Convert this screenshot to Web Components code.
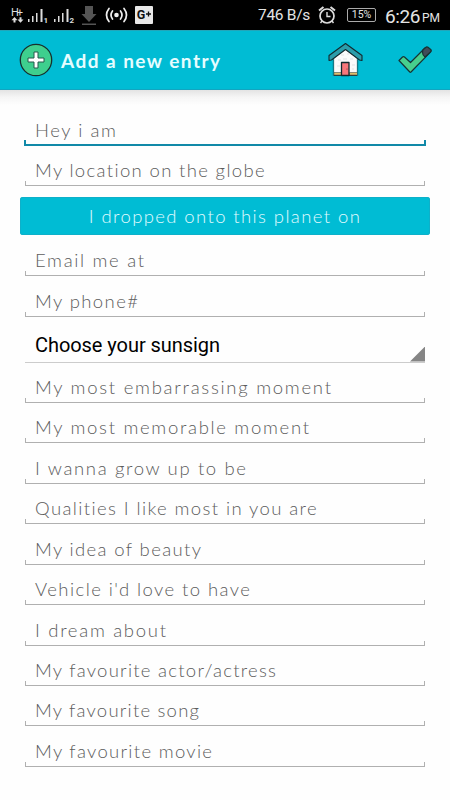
<!DOCTYPE html>
<html lang="en">
<head>
<meta charset="utf-8">
<title>Add a new entry</title>
<style>
body {
  margin: 0;
  background: #fefefe;
  font-family: Lato, "Liberation Sans", sans-serif;
}
</style>
</head>
<body>
<entry-screen></entry-screen>

<script>
// stretches a line of text to the given width by its letter spacing
function fitText(el, text, width) {
  el.style.letterSpacing = '0';
  const natural = el.getBoundingClientRect().width;
  const gaps = text.length - 1;
  el.style.letterSpacing = ((width - natural) / gaps).toFixed(3) + 'px';
}

class StatusBar extends HTMLElement {
  constructor() {
    super();
    this.attachShadow({ mode: 'open' }).innerHTML = `
<style>
:host {
  display: flex;
  justify-content: space-between;
  box-sizing: border-box;
  height: 30px;
  background: #000;
  color: #e4e4e4;
  font-family: Roboto, sans-serif;
}
svg { display: block; }
.right {
  display: flex;
  align-items: center;
  padding-right: 10px;
  white-space: nowrap;
}
.speed { font-size: 15.5px; letter-spacing: -.3px; width: 52px; }
.alarm { margin-left: 8px; }
.battery {
  box-sizing: border-box;
  width: 29px;
  height: 14px;
  margin-left: 11px;
  border: 1px solid #aaa;
  border-radius: 2px;
  font-size: 10.5px;
  line-height: 12.5px;
  text-align: center;
}
.clock { font-size: 19px; letter-spacing: -.4px; margin: 2px 0 0 9px; width: 34px; }
.ampm { font-size: 12px; margin: 6px 0 0 3px; width: 18px; }
</style>
<svg width="160" height="30" viewBox="0 0 160 30" fill="#ddd" font-family="Roboto, sans-serif">
  <text x="11" y="15.500" font-size="11" textLength="12">H+</text>
  <path d="M14.5 17l3 3.2h-2v2.3h-2v-2.3h-2zM20.500 22.700l3-3.200h-2v-2.300h-2v2.300h-2z"/>
  <path d="M28 19h1.500v3h-1.500zM32 16h1.500v6h-1.500zM36 13h1.500v9h-1.500zM40.500 9h2v13h-2z"/>
  <text x="43.500" y="23" font-size="8" font-weight="700">1</text>
  <path d="M54 19h1.500v3h-1.500zM58 16h1.500v6h-1.500zM62 13h1.500v9h-1.500zM66.500 9h2v13h-2z"/>
  <text x="69.500" y="23" font-size="8" font-weight="700">2</text>
  <path d="M85 6h8v8h3.500l-7.500 8-7.500-8h3.500zM82 23.500h14v1.500h-14z" fill="#555"/>
  <g fill="none" stroke="#eee" stroke-width="1.700" stroke-linecap="round">
    <path d="M112.500 11q-3 4 0 8M109 8.500q-5 6.500 0 13M120.500 11q3 4 0 8M124 8.500q5 6.500 0 13"/>
  </g>
  <circle cx="116.500" cy="15" r="2.300" fill="#eee"/>
  <rect x="135" y="6" width="18" height="18" rx="1" fill="#e8e8e8"/>
  <text x="136.700" y="19.300" font-size="12.500" font-weight="700" fill="#111">G</text>
  <path d="M146 14h5M148.500 11.500v5" stroke="#111" stroke-width="1.300"/>
</svg>
<div class="right">
  <span class="speed">746 B/s</span>
  <svg class="alarm" width="18" height="20" viewBox="0 0 18 20" fill="none" stroke="#ddd">
    <circle cx="9" cy="11" r="7" stroke-width="1.700"/>
    <path d="M1 5.500L5.500 2M17 5.500L12.500 2" stroke-width="2"/>
    <path d="M9 7v4.500h3.500" stroke-width="1.400"/>
    <path d="M4 16l-1.500 2M14 16l1.500 2" stroke-width="1.400"/>
  </svg>
  <div class="battery">15%</div>
  <span class="clock">6:26</span>
  <span class="ampm">PM</span>
</div>`;
  }
}
customElements.define('status-bar', StatusBar);

class TitleBar extends HTMLElement {
  constructor() {
    super();
    this.attachShadow({ mode: 'open' }).innerHTML = `
<style>
:host {
  display: flex;
  align-items: center;
  box-sizing: border-box;
  height: 60px;
  padding: 0 18px 0 19px;
  background: #00bcd4;
  border-top: 1px solid #23a5b8;
  border-bottom: 1px solid #12a5c0;
}
svg { display: block; flex: none; }
.title {
  flex: 1;
  margin: 2px 0 0 8px;
  color: #e6fdff;
  font-size: 19px;
  font-weight: 700;
  line-height: 24px;
  white-space: nowrap;
}
.check { margin-left: 35px; }
</style>
<svg width="34" height="34" viewBox="0 0 34 34">
  <circle cx="17" cy="17" r="15.700" fill="#3ecf8e" stroke="#17302d" stroke-width="1.300"/>
  <path d="M15 9h4v6h6v4h-6v6h-4v-6h-6v-4h6z" fill="#fff" stroke="#24584a" stroke-width="1"/>
</svg>
<div class="title"><span><slot></slot></span></div>
<svg class="home" width="36" height="36" viewBox="0 0 36 36" stroke="#122a2f" stroke-linejoin="round">
  <path d="M6.500 15L18.500 6 30.500 15v18.500h-24z" fill="#fbfbfb" stroke-width="1.200"/>
  <path d="M7 30.500h8v2.500H7zM22.500 30.500h8v2.500h-8z" fill="#e2bd69" stroke="#5b665c" stroke-width=".7"/>
  <path d="M14.500 20.500h7.500v13h-7.500z" fill="#f8777b" stroke-width="1.300"/>
  <path d="M18.500 1.500L35 13.500V18.500l-2.500-.5L18.500 7.500 4.500 18l-2.500.5v-5z" fill="#2b9daa" stroke-width="1.100"/>
  <path d="M6.500 17v17M30.500 17v17" stroke="#167985" stroke-width="1"/>
  <path d="M14 13h3M20 12h2M11 18h3M23 17h3M10 24h3M25 23h3M16 17h4M25 27h2" stroke="#d7dadb" stroke-width=".7"/>
  <circle cx="20" cy="27" r=".5" stroke="none" fill="#6a2020"/>
</svg>
<svg class="check" width="34" height="28" viewBox="0 0 34 28" stroke="#173334" stroke-width="1.200" stroke-linejoin="round">
  <path d="M1 14.500l3.500-3.500q1-.8 2 0l6 5.500L27 2q1.500-1.300 3 0l2.500 2q1 1.200-.3 2.400L13 26q-.6.600-1.200 0z" fill="#47cf8d"/>
  <path d="M25 3.800L28 1.300q1-.7 2 0l2.700 2.200q1 1.200-.2 2.400l-5.500 5.100q-3.500-2.500-2-7.200z" fill="#414c58"/>
</svg>`;
  }
  connectedCallback() {
    fitText(this.shadowRoot.querySelector('.title span'), this.textContent, 159);
  }
}
customElements.define('title-bar', TitleBar);

// text line with a hint and an underline turned up at both ends
class EntryField extends HTMLElement {
  constructor() {
    super();
    this.attachShadow({ mode: 'open' }).innerHTML = `
<style>
:host {
  display: flex;
  flex-direction: column;
  justify-content: flex-end;
  height: 40.43px;
  margin: 0 25px;
}
.hint {
  padding: 0 10px;
  color: #5c5c5c;
  font-size: 18.5px;
  font-weight: 300;
  line-height: 22px;
  white-space: nowrap;
}
.line {
  box-sizing: border-box;
  height: 5px;
  border: 1px solid #b0b0b0;
  border-top: 0;
}
:host([active]) { margin: 0 24px; }
:host([active]) .hint { padding: 0 11px; }
:host([active]) .line {
  border: 2px solid #1189a8;
  border-top: 0;
  height: 6px;
  margin-top: -1px;
}
</style>
<div class="hint"><span><slot></slot></span></div>
<div class="line"></div>`;
  }
  connectedCallback() {
    fitText(this.shadowRoot.querySelector('.hint span'), this.textContent, Number(this.getAttribute('fit')));
  }
}
customElements.define('entry-field', EntryField);

class DateButton extends HTMLElement {
  constructor() {
    super();
    this.attachShadow({ mode: 'open' }).innerHTML = `
<style>
:host {
  display: flex;
  justify-content: center;
  height: 38px;
  margin: 10.7px 20px 0;
  border-radius: 3px;
  background: #00bcd4;
  box-shadow: inset 0 0 0 1px #0eb0c9;
  color: #e0fbff;
  font-size: 18.5px;
  font-weight: 300;
  line-height: 38px;
  white-space: nowrap;
}
</style>
<span><slot></slot></span>`;
  }
  connectedCallback() {
    fitText(this.shadowRoot.querySelector('span'), this.textContent, Number(this.getAttribute('fit')));
  }
}
customElements.define('date-button', DateButton);

class SignSpinner extends HTMLElement {
  constructor() {
    super();
    this.attachShadow({ mode: 'open' }).innerHTML = `
<style>
:host {
  display: flex;
  justify-content: space-between;
  align-items: flex-end;
  box-sizing: border-box;
  height: 46px;
  margin: 0 25px;
  padding-left: 10px;
  border-bottom: 1px solid #ccc;
  color: #000;
  font: 400 20px/24px Roboto, sans-serif;
  white-space: nowrap;
}
span { margin-bottom: 5px; }
i {
  width: 15px;
  height: 15px;
  background: #858585;
  clip-path: polygon(100% 0, 100% 100%, 0 100%);
}
</style>
<span><slot></slot></span><i></i>`;
  }
  connectedCallback() {
    fitText(this.shadowRoot.querySelector('span'), this.textContent, Number(this.getAttribute('fit')));
  }
}
customElements.define('sign-spinner', SignSpinner);

class EntryScreen extends HTMLElement {
  constructor() {
    super();
    this.attachShadow({ mode: 'open' }).innerHTML = `
<style>
:host {
  display: block;
  width: 450px;
  height: 800px;
  overflow: hidden;
}
main {
  box-sizing: border-box;
  height: 710px;
  padding-top: 15.6px;
  background: linear-gradient(#e3e3e3, #f5f5f5 7px, #fefefe 15px);
}
.after { margin-top: .6px; }
</style>
<status-bar></status-bar>
<title-bar>Add a new entry</title-bar>
<main>
  <entry-field active fit="81">Hey i am</entry-field>
  <entry-field fit="230">My location on the globe</entry-field>
  <date-button fit="271">I dropped onto this planet on</date-button>
  <entry-field class="after" fit="109">Email me at</entry-field>
  <entry-field fit="103">My phone#</entry-field>
  <sign-spinner fit="185">Choose your sunsign</sign-spinner>
  <entry-field fit="296">My most embarrassing moment</entry-field>
  <entry-field fit="274">My most memorable moment</entry-field>
  <entry-field fit="211">I wanna grow up to be</entry-field>
  <entry-field fit="282">Qualities I like most in you are</entry-field>
  <entry-field fit="166">My idea of beauty</entry-field>
  <entry-field fit="215">Vehicle i'd love to have</entry-field>
  <entry-field fit="131">I dream about</entry-field>
  <entry-field fit="241">My favourite actor/actress</entry-field>
  <entry-field fit="164">My favourite song</entry-field>
  <entry-field fit="177">My favourite movie</entry-field>
</main>`;
  }
}
customElements.define('entry-screen', EntryScreen);
</script>
</body>
</html>
